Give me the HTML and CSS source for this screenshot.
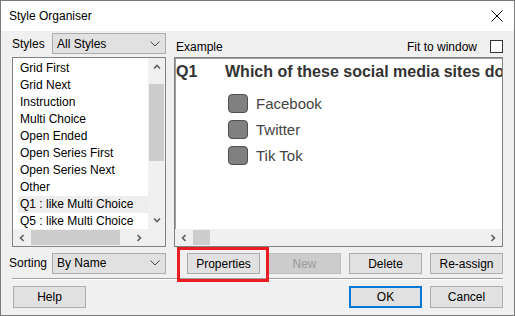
FILE: index.html
```html
<!DOCTYPE html>
<html lang="en">
<head>
    <meta charset="UTF-8">
    <title>Style Organiser</title>
    <link rel="stylesheet" href="styles.css">
</head>
<body>
    <div class="window">
        <div class="titlebar">
            <span class="title">Style Organiser</span>
            <svg class="close" width="12" height="12" viewBox="0 0 12 12">
                <path d="M0.5 0.5 L11.5 11.5 M11.5 0.5 L0.5 11.5" stroke="#000" stroke-width="1" fill="none"/>
            </svg>
        </div>

        <div class="main">
            <!-- Styles list -->
            <div class="field">
                <span class="field-label">Styles</span>
                <div class="combo">
                    <span>All Styles</span>
                    <svg class="combo-arrow" width="10" height="6" viewBox="0 0 10 6"><path d="M0.5 0.5 L5 5 L9.5 0.5" stroke="#444" fill="none"/></svg>
                </div>
            </div>

            <!-- Example header -->
            <div class="example-head">
                <span class="example-label">Example</span>
                <span class="fit-label">Fit to window</span>
                <span class="checkbox"></span>
            </div>

            <div class="listbox">
                <div class="list-top">
                    <ul class="items">
                        <li>Grid First</li>
                        <li>Grid Next</li>
                        <li>Instruction</li>
                        <li>Multi Choice</li>
                        <li>Open Ended</li>
                        <li>Open Series First</li>
                        <li>Open Series Next</li>
                        <li>Other</li>
                        <li class="selected">Q1 : like Multi Choice</li>
                        <li>Q5 : like Multi Choice</li>
                    </ul>
                    <div class="vscroll">
                        <div class="arrow-box"><svg width="8" height="5" viewBox="0 0 8 5"><path d="M1 4.5 L4 1.5 L7 4.5" stroke="#606060" stroke-width="1.6" fill="none"/></svg></div>
                        <div class="vtrack"><div class="vthumb"></div></div>
                        <div class="arrow-box"><svg width="8" height="5" viewBox="0 0 8 5"><path d="M1 0.5 L4 3.5 L7 0.5" stroke="#606060" stroke-width="1.6" fill="none"/></svg></div>
                    </div>
                </div>
                <div class="list-bottom">
                    <div class="hscroll">
                        <div class="arrow-box"><svg width="5" height="8" viewBox="0 0 5 8"><path d="M4.5 1 L1.5 4 L4.5 7" stroke="#606060" stroke-width="1.6" fill="none"/></svg></div>
                        <div class="htrack"><div class="hthumb list-thumb"></div></div>
                        <div class="arrow-box"><svg width="5" height="8" viewBox="0 0 5 8"><path d="M0.5 1 L3.5 4 L0.5 7" stroke="#606060" stroke-width="1.6" fill="none"/></svg></div>
                    </div>
                    <div class="corner"></div>
                </div>
            </div>

            <!-- Preview -->
            <div class="preview">
                <div class="preview-page">
                    <div class="question">
                        <span class="qnum">Q1</span>
                        <span class="qtext">Which of these social media sites do you use?</span>
                    </div>
                    <div class="options">
                        <div class="option"><span class="opt-box"></span>Facebook</div>
                        <div class="option"><span class="opt-box"></span>Twitter</div>
                        <div class="option"><span class="opt-box"></span>Tik Tok</div>
                    </div>
                </div>
                <div class="hscroll preview-scroll">
                    <div class="arrow-box"><svg width="5" height="8" viewBox="0 0 5 8"><path d="M4.5 1 L1.5 4 L4.5 7" stroke="#606060" stroke-width="1.6" fill="none"/></svg></div>
                    <div class="htrack"><div class="hthumb preview-thumb"></div></div>
                    <div class="arrow-box"><svg width="5" height="8" viewBox="0 0 5 8"><path d="M0.5 1 L3.5 4 L0.5 7" stroke="#606060" stroke-width="1.6" fill="none"/></svg></div>
                </div>
            </div>

            <div class="field sorting">
                <span class="field-label">Sorting</span>
                <div class="combo">
                    <span>By Name</span>
                    <svg class="combo-arrow" width="10" height="6" viewBox="0 0 10 6"><path d="M0.5 0.5 L5 5 L9.5 0.5" stroke="#444" fill="none"/></svg>
                </div>
            </div>

            <div class="actions">
                <button class="btn highlighted">Properties</button>
                <button class="btn" disabled>New</button>
                <button class="btn">Delete</button>
                <button class="btn">Re-assign</button>
            </div>
        </div>

        <div class="separator"></div>

        <div class="footer">
            <button class="btn">Help</button>
            <div class="footer-right">
                <button class="btn default">OK</button>
                <button class="btn">Cancel</button>
            </div>
        </div>
    </div>
</body>
</html>
```

FILE: styles.css
```css
body {
    margin: 0;
    font-family: "Liberation Sans", Arial, sans-serif;
    font-size: 12px;
    color: #000;
    background: #f0f0f0;
}

.window {
    width: 515px;
    height: 316px;
    box-sizing: border-box;
    border: 1px solid #7a7a7a;
    background: #f0f0f0;
}

.titlebar {
    height: 30px;
    background: white;
    display: flex;
    align-items: center;
    justify-content: space-between;
    padding: 0 11px 0 8px;
}

.title {
    font-size: 12px;
}

.close {
    display: block;
    margin-top: -1px;
}

.main {
    display: grid;
    grid-template-columns: 154px 329px;
    grid-template-rows: 21px 190px auto;
    column-gap: 8px;
    row-gap: 3px;
    padding: 2px 11px 0 11px;
}

.field {
    display: flex;
    align-items: center;
}

.field-label {
    width: 40px;
}

.sorting {
    margin-left: -3px;
    margin-top: 2px;
}

.sorting .field-label {
    width: 43px;
}

.combo {
    width: 114px;
    height: 21px;
    box-sizing: border-box;
    border: 1px solid #adadad;
    background: #e1e1e1;
    display: flex;
    align-items: center;
    justify-content: space-between;
    padding: 0 5px 0 4px;
}

.combo-arrow {
    display: block;
}

.example-head {
    display: flex;
    align-items: center;
    padding: 6px 0 0 2px;
}

.example-label {
    flex-grow: 1;
}

.fit-label {
    margin-right: 13px;
}

.checkbox {
    width: 13px;
    height: 13px;
    box-sizing: border-box;
    border: 1px solid #333;
    background: white;
}

/* list box */
.listbox {
    border: 1px solid #828282;
    background: white;
    display: flex;
    flex-direction: column;
    overflow: hidden;
}

.list-top {
    display: flex;
    flex-grow: 1;
    min-height: 0;
}

.items {
    list-style: none;
    margin: 0;
    padding: 2px 0 0 5px;
    flex-grow: 1;
    overflow: hidden;
}

.items li {
    height: 17px;
    line-height: 17px;
    padding-left: 2px;
    white-space: nowrap;
}

.items li.selected {
    background: #eeeeee;
}

.vscroll {
    width: 17px;
    background: #f0f0f0;
    display: flex;
    flex-direction: column;
}

.arrow-box {
    width: 17px;
    height: 17px;
    display: flex;
    align-items: center;
    justify-content: center;
    flex-shrink: 0;
}

.arrow-box svg {
    display: block;
}

.vtrack {
    flex-grow: 1;
    padding: 9px 1px 0 1px;
}

.vthumb {
    height: 77px;
    background: #cdcdcd;
}

.list-bottom {
    display: flex;
    height: 17px;
}

.hscroll {
    display: flex;
    flex-grow: 1;
    height: 17px;
    background: #f0f0f0;
}

.preview-scroll {
    flex: none;
}

.htrack {
    flex-grow: 1;
    padding: 1px 0 1px 1px;
}

.hthumb {
    height: 15px;
    background: #cdcdcd;
}

.list-thumb {
    width: 89px;
}

.preview-thumb {
    width: 17px;
}

.corner {
    width: 17px;
    background: #f0f0f0;
}

/* preview */
.preview {
    border: 1px solid #828282;
    box-shadow: inset 1px 1px 0 #a0a0a0;
    background: white;
    display: flex;
    flex-direction: column;
    overflow: hidden;
}

.preview-page {
    flex-grow: 1;
    padding: 4px 0 0 1px;
    overflow: hidden;
    font-family: "Liberation Sans", Arial, sans-serif;
}

.question {
    display: flex;
    white-space: nowrap;
    font-size: 16px;
    font-weight: bold;
    color: #333;
    line-height: 20px;
}

.qnum {
    width: 49px;
    flex-shrink: 0;
}

.options {
    margin: 8px 0 0 52px;
}

.option {
    display: flex;
    align-items: center;
    gap: 8px;
    height: 26px;
    font-size: 15px;
    color: #444;
}

.opt-box {
    width: 20px;
    height: 19px;
    box-sizing: border-box;
    border: 1px solid #505050;
    border-radius: 4px;
    background: #808080;
}

/* buttons */
.actions {
    display: flex;
    justify-content: flex-end;
    gap: 8px;
    margin-top: 3px;
}

.btn {
    width: 73px;
    height: 21px;
    box-sizing: border-box;
    border: 1px solid #adadad;
    background: #e1e1e1;
    font-family: "Liberation Sans", Arial, sans-serif;
    font-size: 12px;
    color: #000;
    padding: 0;
}

.btn:disabled {
    background: #cccccc;
    border-color: #bfbfbf;
    color: #9a9a9a;
}

.btn.highlighted {
    position: relative;
}

.btn.highlighted::after {
    content: "";
    position: absolute;
    top: -7px;
    left: -11px;
    right: -10px;
    bottom: -9px;
    border: 3px solid #ec1c24;
}

.separator {
    margin: 4px 11px 0 11px;
    border-top: 1px solid #a0a0a0;
    border-bottom: 1px solid #ffffff;
}

.footer {
    display: flex;
    justify-content: space-between;
    padding: 6px 11px 0 12px;
}

.footer .btn {
    height: 22px;
}

.footer-right {
    display: flex;
    gap: 8px;
}

.btn.default {
    border: 1px solid #0078d7;
    box-shadow: inset 0 0 0 1px #0078d7;
}
```
